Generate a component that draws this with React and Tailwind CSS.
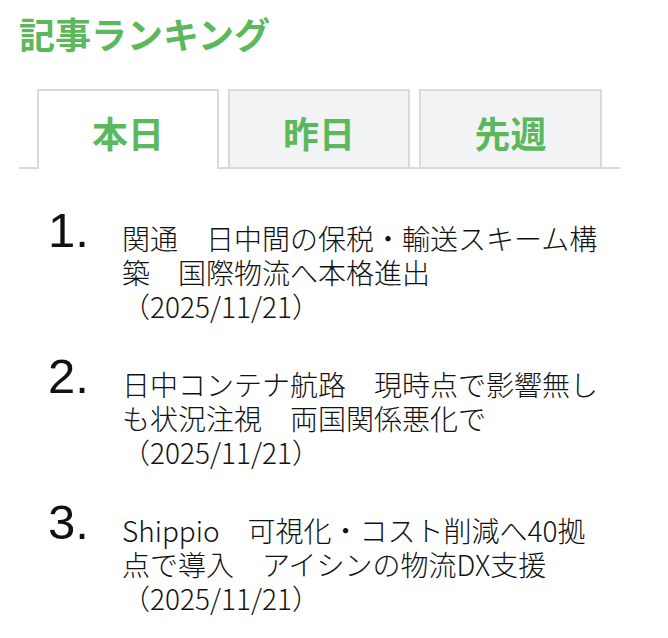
import React from "react";

const items = [
  ["関通　日中間の保税・輸送スキーム構", "築　国際物流へ本格進出", "（2025/11/21）"],
  ["日中コンテナ航路　現時点で影響無し", "も状況注視　両国関係悪化で", "（2025/11/21）"],
  ["Shippio　可視化・コスト削減へ40拠", "点で導入　アイシンの物流DX支援", "（2025/11/21）"],
];

export default function App() {
  return (
    <div
      className="w-[668px] h-[638px] bg-white pl-[19px] overflow-hidden"
      style={{ fontFamily: '"Noto Sans CJK JP", "Noto Sans", sans-serif' }}
    >
      <h2 className="pt-[12px] text-[36px] leading-[1.2] font-bold text-[#5cb85c]">
        記事ランキング
      </h2>
      <div className="mt-[34px] w-[601px] h-[80px] flex items-end gap-[9px] pl-[18px] border-b-2 border-[#dadada]">
        <div className="relative -mb-[2px] w-[182px] h-[80px] border-2 border-b-0 border-[#dadada] bg-white flex items-center justify-center pt-[3px] text-[36px] leading-none font-bold text-[#5cb85c]">
          本日
        </div>
        <div className="w-[182px] h-[78px] border-2 border-b-0 border-[#dadada] bg-[#f2f3f5] flex items-center justify-center pt-[5px] text-[36px] leading-none font-bold text-[#5cb85c]">
          昨日
        </div>
        <div className="w-[183px] h-[78px] border-2 border-b-0 border-[#dadada] bg-[#f2f3f5] flex items-center justify-center pt-[5px] text-[36px] leading-none font-bold text-[#5cb85c]">
          先週
        </div>
      </div>
      <ol className="mt-[37px] flex flex-col gap-[29px]">
        {items.map((lines, i) => (
          <li key={i} className="flex items-start text-[#111]">
            <div
              className="w-[103px] shrink-0 pl-[29px] text-[49px] leading-none"
              style={{ fontFamily: '"Liberation Sans", Arial, sans-serif' }}
            >
              {i + 1}.
            </div>
            <div className="pt-[15px] text-[28px] leading-[34px] font-light whitespace-nowrap">
              {lines[0]}
              <br />
              {lines[1]}
              <br />
              {lines[2]}
            </div>
          </li>
        ))}
      </ol>
    </div>
  );
}
